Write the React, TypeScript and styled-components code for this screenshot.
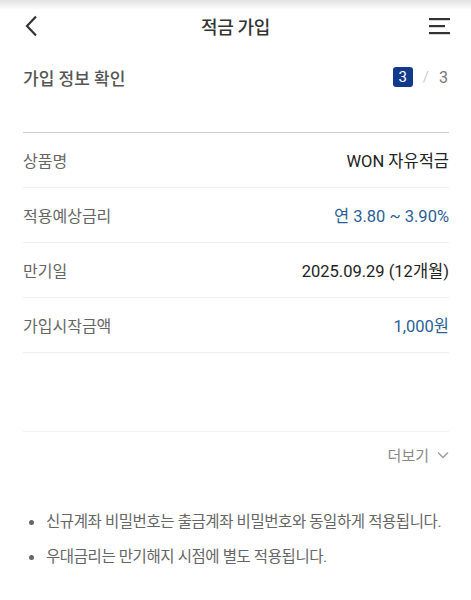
import React from "react";
import styled, { createGlobalStyle } from "styled-components";

const Global = createGlobalStyle`
  html, body { margin: 0; padding: 0; background: #fff; }
  body { font-family: Roboto, "Noto Sans CJK KR", sans-serif; color: #222; }
`;

const Page = styled.div`
  width: 471px;
  height: 600px;
  background: #fff;
  position: relative;
  overflow: hidden;
`;

const TopShade = styled.div`
  position: absolute;
  top: 0; left: 0; right: 0;
  height: 10px;
  background: linear-gradient(#e2e2e2, rgba(255,255,255,0));
`;

const Header = styled.header`
  height: 52px;
  display: grid;
  grid-template-columns: 60px 1fr 60px;
  align-items: center;
`;

const IconBtn = styled.button<{ $align: "start" | "end" }>`
  border: 0; background: none; padding: 0;
  display: flex;
  justify-content: ${p => (p.$align === "start" ? "flex-start" : "flex-end")};
  padding-left: ${p => (p.$align === "start" ? "24px" : "0")};
  padding-right: ${p => (p.$align === "end" ? "20px" : "0")};
`;

const Title = styled.h1`
  margin: 0;
  text-align: center;
  font-size: 18px;
  font-weight: 500;
  color: #333;
  letter-spacing: -0.3px;
`;

const Content = styled.main`
  padding: 0 22px 0 23px;
`;

const StepRow = styled.div`
  display: flex;
  justify-content: space-between;
  align-items: center;
  height: 50px;
`;

const StepTitle = styled.h2`
  margin: 0;
  font-size: 17px;
  font-weight: 500;
  color: #555;
`;

const Steps = styled.div`
  display: flex;
  align-items: center;
  gap: 10px;
  font-size: 16px;
  color: #777;
  padding-right: 1px;
`;

const Badge = styled.span`
  width: 20px;
  height: 20px;
  border-radius: 3px;
  background: #12398c;
  color: #fff;
  font-size: 15px;
  display: inline-flex;
  align-items: center;
  justify-content: center;
`;

const Slash = styled.span`
  color: #ccc;
  font-size: 15px;
`;

const InfoList = styled.dl`
  margin: 30px 0 0;
  border-top: 1px solid #cfcfcf;
`;

const Row = styled.div`
  display: flex;
  justify-content: space-between;
  align-items: center;
  height: 54px;
  border-bottom: 1px solid #f0f0f0;
`;

const Label = styled.dt`
  font-size: 16px;
  color: #666;
`;

const Value = styled.dd<{ $blue?: boolean }>`
  margin: 0;
  font-size: 16.5px;
  color: ${p => (p.$blue ? "#2b5f98" : "#222")};
  letter-spacing: 0;
`;

const MoreArea = styled.div`
  margin-top: 78px;
  border-top: 1px solid #f2f2f2;
  display: flex;
  justify-content: flex-end;
  padding-top: 12px;
`;

const More = styled.button`
  border: 0; background: none; padding: 0;
  font-family: inherit;
  font-size: 15px;
  color: #888;
  display: flex;
  align-items: center;
  gap: 8px;
`;

const Notes = styled.ul`
  margin: 47px 0 0;
  padding: 0;
  list-style: none;
  display: flex;
  flex-direction: column;
  gap: 14px;
`;

const Note = styled.li`
  font-size: 15.5px;
  letter-spacing: -0.4px;
  color: #666;
  display: flex;
  align-items: center;
  gap: 12px;
  padding-left: 6px;
  line-height: 21px;
  white-space: nowrap;
  &::before {
    content: "";
    flex: none;
    width: 5px;
    height: 5px;
    border-radius: 50%;
    background: #666;
  }
`;

export default function App() {
  const rows = [
    { k: "상품명", v: "WON 자유적금" },
    { k: "적용예상금리", v: "연 3.80 ~ 3.90%", blue: true },
    { k: "만기일", v: "2025.09.29 (12개월)" },
    { k: "가입시작금액", v: "1,000원", blue: true },
  ];
  return (
    <Page>
      <Global />
      <TopShade />
      <Header>
        <IconBtn $align="start" aria-label="뒤로">
          <svg width="14" height="22" viewBox="0 0 14 22">
            <path d="M12 1.5 L3 11 L12 20.5" fill="none" stroke="#333" strokeWidth="2.2" />
          </svg>
        </IconBtn>
        <Title>적금 가입</Title>
        <IconBtn $align="end" aria-label="메뉴">
          <svg width="22" height="18" viewBox="0 0 22 18">
            <rect x="0" y="1" width="21" height="2.2" fill="#333" />
            <rect x="0" y="8" width="16" height="2.2" fill="#333" />
            <rect x="0" y="15" width="21" height="2.2" fill="#333" />
          </svg>
        </IconBtn>
      </Header>
      <Content>
        <StepRow>
          <StepTitle>가입 정보 확인</StepTitle>
          <Steps>
            <Badge>3</Badge>
            <Slash>/</Slash>
            <span>3</span>
          </Steps>
        </StepRow>
        <InfoList>
          {rows.map(r => (
            <Row key={r.k}>
              <Label>{r.k}</Label>
              <Value $blue={r.blue}>{r.v}</Value>
            </Row>
          ))}
        </InfoList>
        <MoreArea>
          <More>
            더보기
            <svg width="12" height="8" viewBox="0 0 12 8">
              <path d="M1 1.5 L6 6.5 L11 1.5" fill="none" stroke="#999" strokeWidth="1.3" />
            </svg>
          </More>
        </MoreArea>
        <Notes>
          <Note>신규계좌 비밀번호는 출금계좌 비밀번호와 동일하게 적용됩니다.</Note>
          <Note>우대금리는 만기해지 시점에 별도 적용됩니다.</Note>
        </Notes>
      </Content>
    </Page>
  );
}
